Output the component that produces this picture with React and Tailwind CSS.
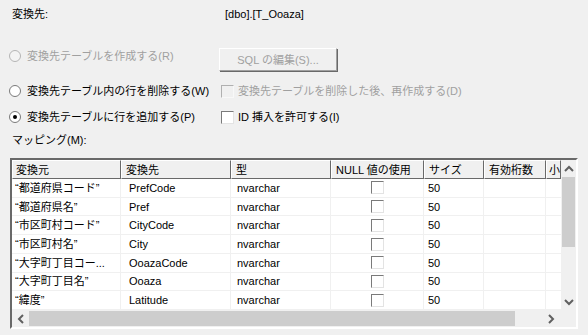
import React from 'react';

const font = { fontFamily: '"Liberation Sans", "Noto Sans CJK JP", sans-serif' };

const Radio = ({ checked = false, disabled = false }) => (
  <span
    className={`flex shrink-0 items-center justify-center w-[12px] h-[12px] rounded-full border ${
      disabled ? 'border-[#b5b5b5] bg-[#f4f4f4]' : 'border-[#7a7a7a] bg-white'
    }`}
  >
    {checked && <span className="w-[4px] h-[4px] rounded-full bg-black" />}
  </span>
);

const Check = ({ disabled = false }) => (
  <span
    className={`block shrink-0 w-[13px] h-[13px] border-t border-l border-b border-r ${
      disabled
        ? 'border-t-[#b0b0b0] border-l-[#b0b0b0] border-b-[#f8f8f8] border-r-[#f8f8f8] bg-[#f0f0f0]'
        : 'border-t-[#7a7a7a] border-l-[#7a7a7a] border-b-[#e3e3e3] border-r-[#e3e3e3] bg-white'
    }`}
  />
);

const cols = [
  { label: '変換元', w: 'w-[109px]', pad: 'pl-[3px]' },
  { label: '変換先', w: 'w-[110px]', pad: 'pl-[4px]' },
  { label: '型', w: 'w-[100px]', pad: 'pl-[4px]' },
  { label: 'NULL 値の使用', w: 'w-[93px]', pad: 'pl-[4px]' },
  { label: 'サイズ', w: 'w-[60px]', pad: 'pl-[4px]' },
  { label: '有効桁数', w: 'w-[62px]', pad: 'pl-[4px]' },
  { label: '小', w: 'w-[15px]', pad: 'pl-[2px]' },
];

const rows = [
  ['“都道府県コード”', 'PrefCode'],
  ['“都道府県名”', 'Pref'],
  ['“市区町村コード”', 'CityCode'],
  ['“市区町村名”', 'City'],
  ['“大字町丁目コー...', 'OoazaCode'],
  ['“大字町丁目名”', 'Ooaza'],
  ['“緯度”', 'Latitude'],
];

const Chevron = ({ dir }) => {
  const d = {
    up: 'M1 6 L5 2 L9 6',
    down: 'M1 2 L5 6 L9 2',
    left: 'M6 1 L2 5 L6 9',
    right: 'M2 1 L6 5 L2 9',
  }[dir];
  const vb = dir === 'up' || dir === 'down' ? '0 0 10 8' : '0 0 8 10';
  const size = dir === 'up' || dir === 'down' ? 'w-[10px] h-[8px]' : 'w-[8px] h-[10px]';
  return (
    <svg viewBox={vb} className={size}>
      <path d={d} fill="none" stroke="#606060" strokeWidth="2" />
    </svg>
  );
};

export default function App() {
  return (
    <div
      className="w-[588px] h-[335px] bg-[#f0f0f0] text-[11px] leading-[14px] text-black overflow-hidden whitespace-nowrap"
      style={font}
    >
      <div className="flex pt-[7px] pl-[12px]">
        <span className="w-[213px]">変換先:</span>
        <span>[dbo].[T_Ooaza]</span>
      </div>

      <div className="flex items-start mt-[27px] pl-[9px]">
        <div className="flex items-center gap-[6px] w-[210px] mt-[1px] text-[#a0a0a0]">
          <Radio disabled />
          <span>変換先テーブルを作成する(R)</span>
        </div>
        <button
          disabled
          className="w-[118px] h-[23px] border border-t-white border-l-white border-b-[#a0a0a0] border-r-[#a0a0a0] shadow-[1px_1px_0_#696969] text-[#a0a0a0] bg-[#f0f0f0]"
        >
          SQL の編集(S)...
        </button>
      </div>

      <div className="flex items-center mt-[13px] pl-[9px]">
        <div className="flex items-center gap-[6px] w-[212px] shrink-0">
          <Radio />
          <span>変換先テーブル内の行を削除する(W)</span>
        </div>
        <div className="flex items-center gap-[4px] text-[#a0a0a0]">
          <Check disabled />
          <span>変換先テーブルを削除した後、再作成する(D)</span>
        </div>
      </div>

      <div className="flex items-center mt-[12px] pl-[9px]">
        <div className="flex items-center gap-[6px] w-[212px] shrink-0">
          <Radio checked />
          <span>変換先テーブルに行を追加する(P)</span>
        </div>
        <div className="flex items-center gap-[4px]">
          <Check />
          <span>ID 挿入を許可する(I)</span>
        </div>
      </div>

      <div className="mt-[9px] pl-[12px]">マッピング(M):</div>

      <div className="mt-[11px] ml-[10px] w-[568px] h-[171px] border-2 border-t-[#696969] border-l-[#696969] border-b-white border-r-white bg-[#f0f0f0] flex flex-col">
        <div className="flex flex-1 min-h-0">
          <div className="flex flex-col w-[549px] bg-white">
            <div className="flex h-[19px] bg-[#f0f0f0]">
              {cols.map((c) => (
                <div
                  key={c.label}
                  className={`${c.w} ${c.pad} h-[19px] flex items-center border border-t-white border-l-white border-b-[#696969] border-r-[#696969] overflow-hidden`}
                >
                  {c.label}
                </div>
              ))}
            </div>
            {rows.map(([src, dst]) => (
              <div key={dst} className="flex h-[19px] border-b border-[#f0f0f0]">
                <div className="w-[109px] pl-[3px] flex items-center border-r border-[#f0f0f0] overflow-hidden">
                  {src}
                </div>
                <div className="w-[110px] pl-[8px] flex items-center border-r border-[#f0f0f0]">{dst}</div>
                <div className="w-[100px] pl-[6px] flex items-center border-r border-[#f0f0f0]">nvarchar</div>
                <div className="w-[93px] flex items-center justify-center border-r border-[#f0f0f0]">
                  <Check />
                </div>
                <div className="w-[60px] pl-[4px] flex items-center border-r border-[#f0f0f0]">50</div>
                <div className="w-[62px] border-r border-[#f0f0f0]" />
                <div className="w-[15px]" />
              </div>
            ))}
          </div>
          <div className="w-[17px] flex flex-col bg-[#f0f0f0]">
            <div className="h-[17px] flex items-center justify-center">
              <Chevron dir="up" />
            </div>
            <div className="h-[70px] mx-[1px] bg-[#cdcdcd]" />
            <div className="flex-1" />
            <div className="h-[17px] flex items-center justify-center">
              <Chevron dir="down" />
            </div>
          </div>
        </div>
        <div className="flex h-[17px]">
          <div className="w-[17px] flex items-center justify-center">
            <Chevron dir="left" />
          </div>
          <div className="w-[486px] my-[1px] bg-[#cdcdcd]" />
          <div className="flex-1" />
          <div className="w-[17px] flex items-center justify-center">
            <Chevron dir="right" />
          </div>
          <div className="w-[17px]" />
        </div>
      </div>
    </div>
  );
}
